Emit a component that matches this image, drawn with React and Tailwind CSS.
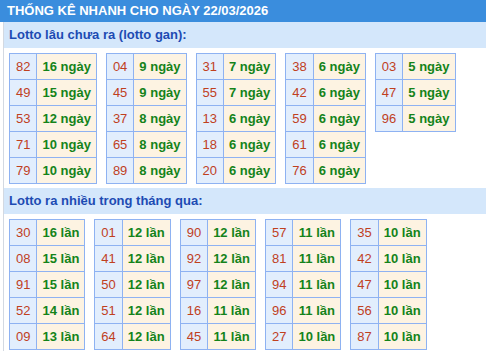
import React from "react";

const gan = [
  [["82","16 ngày"],["49","15 ngày"],["53","12 ngày"],["71","10 ngày"],["79","10 ngày"]],
  [["04","9 ngày"],["45","9 ngày"],["37","8 ngày"],["65","8 ngày"],["89","8 ngày"]],
  [["31","7 ngày"],["55","7 ngày"],["13","6 ngày"],["18","6 ngày"],["20","6 ngày"]],
  [["38","6 ngày"],["42","6 ngày"],["59","6 ngày"],["61","6 ngày"],["76","6 ngày"]],
  [["03","5 ngày"],["47","5 ngày"],["96","5 ngày"]],
];

const nhieu = [
  [["30","16 lần"],["08","15 lần"],["91","15 lần"],["52","14 lần"],["09","13 lần"]],
  [["01","12 lần"],["41","12 lần"],["50","12 lần"],["51","12 lần"],["64","12 lần"]],
  [["90","12 lần"],["92","12 lần"],["97","12 lần"],["16","11 lần"],["45","11 lần"]],
  [["57","11 lần"],["81","11 lần"],["94","11 lần"],["96","11 lần"],["27","10 lần"]],
  [["35","10 lần"],["42","10 lần"],["47","10 lần"],["56","10 lần"],["87","10 lần"]],
];

function Tbl({ rows }) {
  return (
    <table className="border-collapse border border-[#8eb2f2]">
      <tbody>
        {rows.map(([n, t], i) => (
          <tr key={i} className="h-[26px]">
            <td className="border border-[#8eb2f2] bg-[#e2eefd] px-[6px] py-0 text-center text-[13px] leading-none text-[#c0401e]">
              {n}
            </td>
            <td className="border border-[#8eb2f2] bg-[#fdf3e2] px-[5px] py-0 text-center text-[13px] font-bold leading-none text-[#14831a] whitespace-nowrap">
              {t}
            </td>
          </tr>
        ))}
      </tbody>
    </table>
  );
}

function Section({ title, tables }) {
  return (
    <div>
      <div className="flex h-[26px] items-center bg-[#d4e7fb] pl-[5px] text-[13px] font-bold text-[#1d4bb3]">
        {title}
      </div>
      <div className="flex items-start gap-[9px] pl-[5px] pt-[5px] pb-[4px]">
        {tables.map((r, i) => (
          <Tbl key={i} rows={r} />
        ))}
      </div>
    </div>
  );
}

export default function App() {
  return (
    <div
      className="h-[351px] w-[486px] overflow-hidden bg-white"
      style={{ fontFamily: '"Liberation Sans", Arial, sans-serif' }}
    >
      <div className="flex h-[22px] items-center bg-[#3a8ddd] pl-[7px] text-[13px] font-bold text-white">
        THỐNG KÊ NHANH CHO NGÀY 22/03/2026
      </div>
      <div className="ml-[3px] border-l border-[#d3d9e2]">
        <Section title="Lotto lâu chưa ra (lotto gan):" tables={gan} />
        <Section title="Lotto ra nhiều trong tháng qua:" tables={nhieu} />
      </div>
    </div>
  );
}
